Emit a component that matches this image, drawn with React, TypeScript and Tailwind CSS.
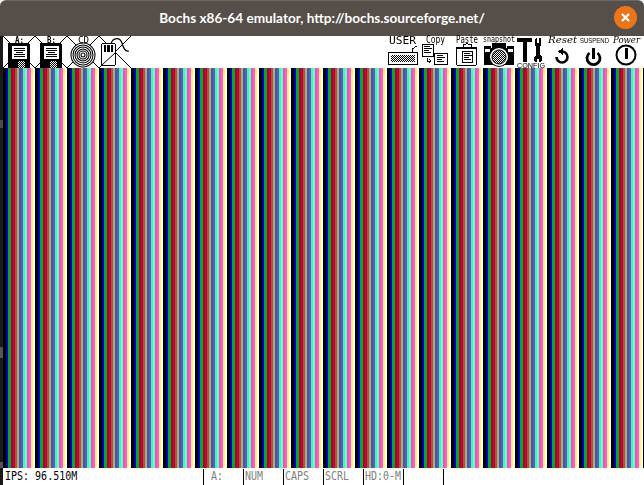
import React from "react";

const band: [string, number][] = [
  ["#000000", 3], ["#0000b8", 2], ["#00a838", 3], ["#c00010", 2], ["#b80060", 2], ["#a85c10", 2], ["#a8a8a8", 2],
  ["#585878", 2], ["#5454fc", 2], ["#54fc74", 2], ["#54fcfc", 2], ["#fc5490", 2], ["#fc54fc", 2], ["#fcfc54", 2], ["#ffffff", 2],
];

function Stripes() {
  const cells: React.ReactNode[] = [];
  for (let r = 0; r < 21; r++) {
    band.forEach(([c, w], i) =>
      cells.push(<div key={r + "-" + i} className="shrink-0" style={{ background: c, width: w }} />)
    );
  }
  return <div className="flex h-[400px] overflow-hidden">{cells}</div>;
}

const Dither = ({ id }: { id: string }) => (
  <defs>
    <pattern id={id} width="2" height="2" patternUnits="userSpaceOnUse">
      <rect width="2" height="2" fill="#fff" />
      <rect width="1" height="1" fill="#000" />
      <rect x="1" y="1" width="1" height="1" fill="#000" />
    </pattern>
  </defs>
);

const Icon = ({ children, x }: { children: React.ReactNode; x?: boolean }) => (
  <svg width="32" height="32" viewBox="0 0 32 32" shapeRendering="crispEdges" className="shrink-0 block overflow-visible [will-change:transform]">
    {x && (
      <g stroke="#000" strokeWidth="1" shapeRendering="auto">
        <line x1="0" y1="0" x2="32" y2="32" />
        <line x1="32" y1="0" x2="0" y2="32" />
      </g>
    )}
    {children}
  </svg>
);

const Label = ({ t, x, y = 7, w, size = 9, italic, serif, sans, bold }: { t: string; x: number; y?: number; w: number; size?: number; italic?: boolean; serif?: boolean; sans?: boolean; bold?: boolean }) => (
  <text x={x} y={y} textLength={w} lengthAdjust="spacingAndGlyphs" fontSize={size} fill="#000" fontWeight={bold ? 700 : 400} fontStyle={italic ? "italic" : "normal"}
    style={{ fontFamily: serif ? "'DejaVu Serif', serif" : sans ? "'Liberation Sans', sans-serif" : "'DejaVu Sans Mono', monospace" }}>
    {t}
  </text>
);

const Floppy = ({ l, id }: { l: string; id: string }) => (
  <Icon x>
    <Dither id={id} />
    <rect x="11" y="0" width="11" height="7" fill="#fff" />
    <Label t={l} x={12} y={6.5} w={9} size={9} bold />
    <path d="M5 7h20l2 2v23H5z" fill="#000" />
    <rect x="9" y="10" width="15" height="13" fill="#fff" />
    <path d="M11 12h11v1H11zM11 14h11v1H11zM13 16h7v1h-7zM11 18h11v1H11zM11 20h11v1H11z" fill="#000" />
    <rect x="15" y="25" width="7" height="7" fill={`url(#${id})`} />
  </Icon>
);

const CD = () => (
  <Icon x>
    <rect x="10" y="0" width="13" height="7" fill="#fff" />
    <Label t="CD" x={11} y={7} w={11} size={9} />
    <g shapeRendering="auto" fill="#fff" stroke="#000" strokeWidth="1.05">
      <circle cx="16" cy="19" r="12" />
      <circle cx="16" cy="19" r="10" />
      <circle cx="16" cy="19" r="8" />
      <circle cx="16" cy="19" r="6" />
      <circle cx="16" cy="19" r="4" />
      <circle cx="16" cy="19" r="2" />
    </g>
  </Icon>
);

const Mouse = () => (
  <Icon x>
    <path d="M12 8 C14 1 21 1 23 7 C24 11 26 16 30 15" fill="none" stroke="#000" strokeWidth="1.2" shapeRendering="auto" />
    <rect x="2.5" y="7.5" width="14" height="22" rx="2" fill="#fff" stroke="#000" />
    <line x1="3" y1="29" x2="16" y2="17" stroke="#000" shapeRendering="auto" />
    <rect x="5" y="9" width="2" height="7" fill="#000" />
    <rect x="8" y="9" width="3" height="7" fill="#000" />
    <rect x="12" y="9" width="2" height="7" fill="#000" />
  </Icon>
);

const Keyboard = () => (
  <Icon>
    <Dither id="kb" />
    <Label t="USER" x={2} y={7.5} w={27} size={10} />
    <path d="M25 16v-3l5-3" fill="none" stroke="#000" />
    <rect x="1.5" y="16.5" width="29" height="12" fill="#fff" stroke="#000" />
    <rect x="4" y="19" width="24" height="7" fill="url(#kb)" />
  </Icon>
);

const DocLines = ({ x, y }: { x: number; y: number }) => (
  <path d={`M${x} ${y}h6v1h-6zM${x} ${y + 2}h8v1h-8zM${x} ${y + 4}h5v1h-5zM${x} ${y + 6}h7v1h-7z`} fill="#000" />
);

const Copy = () => (
  <Icon>
    <Label t="Copy" x={7} y={7} w={19} size={10} />
    <rect x="3.5" y="8.5" width="11" height="12" fill="#fff" stroke="#000" />
    <DocLines x={5} y={10} />
    <rect x="15.5" y="17.5" width="13" height="11" fill="#fff" stroke="#000" />
    <DocLines x={18} y={19} />
    <path d="M8 22v3h4M10 23l2 2-2 2" fill="none" stroke="#000" />
  </Icon>
);

const Paste = () => (
  <Icon>
    <Label t="Paste" x={5} y={7} w={22} size={10} />
    <rect x="5.5" y="11.5" width="20" height="18" rx="2" fill="#fff" stroke="#000" />
    <rect x="5" y="11" width="21" height="2" fill="#000" />
    <path d="M12 8h3l1-1 1 1h3v3h-8z" fill="#fff" stroke="#000" />
    <rect x="11.5" y="15.5" width="10" height="11" fill="#fff" stroke="#000" />
    <DocLines x={13} y={17} />
  </Icon>
);

const Snapshot = () => (
  <Icon>
    <Dither id="sn" />
    <Label t="snapshot" x={0} y={6} w={32} size={9} />
    <path d="M1 10h7v2h16v-2h7v19H1z" fill="#000" />
    <path d="M2 13h5v3H2zM25 13h5v3h-5z" fill="#fff" />
    <rect x="9" y="7" width="14" height="5" fill="#000" />
    <g shapeRendering="auto">
      <circle cx="16" cy="21" r="10" fill="#000" />
      <circle cx="16" cy="21" r="9" fill="#fff" />
      <circle cx="16" cy="21" r="7" fill="url(#sn)" stroke="#000" />
    </g>
  </Icon>
);

const Config = () => (
  <Icon>
    <path d="M2 2h15v4h-5v20H8V6H2z" fill="#000" />
    <path d="M21 2h1v5h2V2h1l1 1v6l-1 2v8l2 2v4l-2 1h-1v-3h-2v3h-1l-2-1v-4l2-2v-8l-1-2V3z" fill="#000" />
    <Label t="CONFIG" x={2} y={31.5} w={28} size={7.5} sans />
  </Icon>
);

const Reset = () => (
  <Icon>
    <Label t="Reset" x={1} y={7} w={29} size={9} italic serif />
    <path d="M15 15.5A5.5 5.5 0 1 1 9.5 21" fill="none" stroke="#000" strokeWidth="2.6" shapeRendering="auto" />
    <path d="M16 12l-5 3.5 5 3.5z" fill="#000" />
  </Icon>
);

const Suspend = () => (
  <Icon>
    <Label t="SUSPEND" x={1} y={6.5} w={29} size={7.5} sans />
    <path d="M10.5 17a6.5 6.5 0 1 0 8 0" fill="none" stroke="#000" strokeWidth="2.8" shapeRendering="auto" />
    <rect x="13" y="12" width="3" height="11" fill="#000" />
  </Icon>
);

const Power = () => (
  <Icon>
    <Label t="Power" x={2} y={7} w={27} size={9} italic serif />
    <circle cx="15" cy="19" r="9.5" fill="#fff" stroke="#000" strokeWidth="2" shapeRendering="auto" />
    <rect x="14" y="12" width="3" height="11" fill="#000" />
  </Icon>
);

const cells = ["A:", "NUM", "CAPS", "SCRL", "HD:0-M", "", ""];

const Tall = ({ children }: { children: React.ReactNode }) => (
  <span className="inline-block origin-bottom scale-y-[1.3]">{children}</span>
);

export default function App() {
  return (
    <div className="w-[644px] h-[485px] overflow-hidden bg-white flex flex-col" style={{ fontFamily: "'DejaVu Sans Mono', monospace" }}>
      <header className="h-[36px] shrink-0 bg-[#554e49] rounded-t-[6px] border-t border-[#6e6762] flex items-center relative">
        <div className="flex-1 text-center text-white text-[13.6px] font-bold pb-[1px]" style={{ fontFamily: "Lato, sans-serif" }}>
          Bochs x86-64 emulator, http://bochs.sourceforge.net/
        </div>
        <div className="absolute right-[7px] top-[5px] w-[23px] h-[23px] rounded-full bg-[#e9761b] flex items-center justify-center">
          <svg width="11" height="11" viewBox="0 0 11 11"><path d="M2 2l7 7M9 2l-7 7" stroke="#fff" strokeWidth="2.2" /></svg>
        </div>
      </header>
      <div className="flex flex-1 min-h-0">
        <aside className="w-[3px] shrink-0 bg-[#1a1a1a] flex flex-col">
          <div className="h-[84px] shrink-0" />
          <div className="h-[8px] shrink-0 bg-[#4a4a4a]" />
          <div className="h-[219px] shrink-0" />
          <div className="h-[11px] shrink-0 bg-[#555]" />
          <div className="h-[104px] shrink-0" />
          <div className="h-[6px] shrink-0 bg-[#555]" />
        </aside>
        <main className="flex-1 min-w-0 flex flex-col bg-white">
          <div className="h-[32px] shrink-0 flex justify-between pr-[1px]">
            <div className="flex">
              <Floppy l="A:" id="fa" />
              <Floppy l="B:" id="fb" />
              <CD />
              <Mouse />
            </div>
            <div className="flex">
              <Keyboard />
              <Copy />
              <Paste />
              <Snapshot />
              <Config />
              <Reset />
              <Suspend />
              <Power />
            </div>
          </div>
          <Stripes />
          <footer className="flex-1 min-h-0 flex pt-[1px] text-[10px] leading-[16px]">
            <div className="w-[200px] pl-[2px] pt-[1px] text-black"><Tall>IPS: 96.510M</Tall></div>
            {cells.map((t, i) => (
              <div key={i} className={`w-[40px] border-l border-black pt-[1px] text-[#808080] whitespace-nowrap ${i === 0 ? "pl-[7px]" : "pl-[1px]"}`}>
                <Tall>{t}</Tall>
              </div>
            ))}
          </footer>
        </main>
      </div>
    </div>
  );
}
